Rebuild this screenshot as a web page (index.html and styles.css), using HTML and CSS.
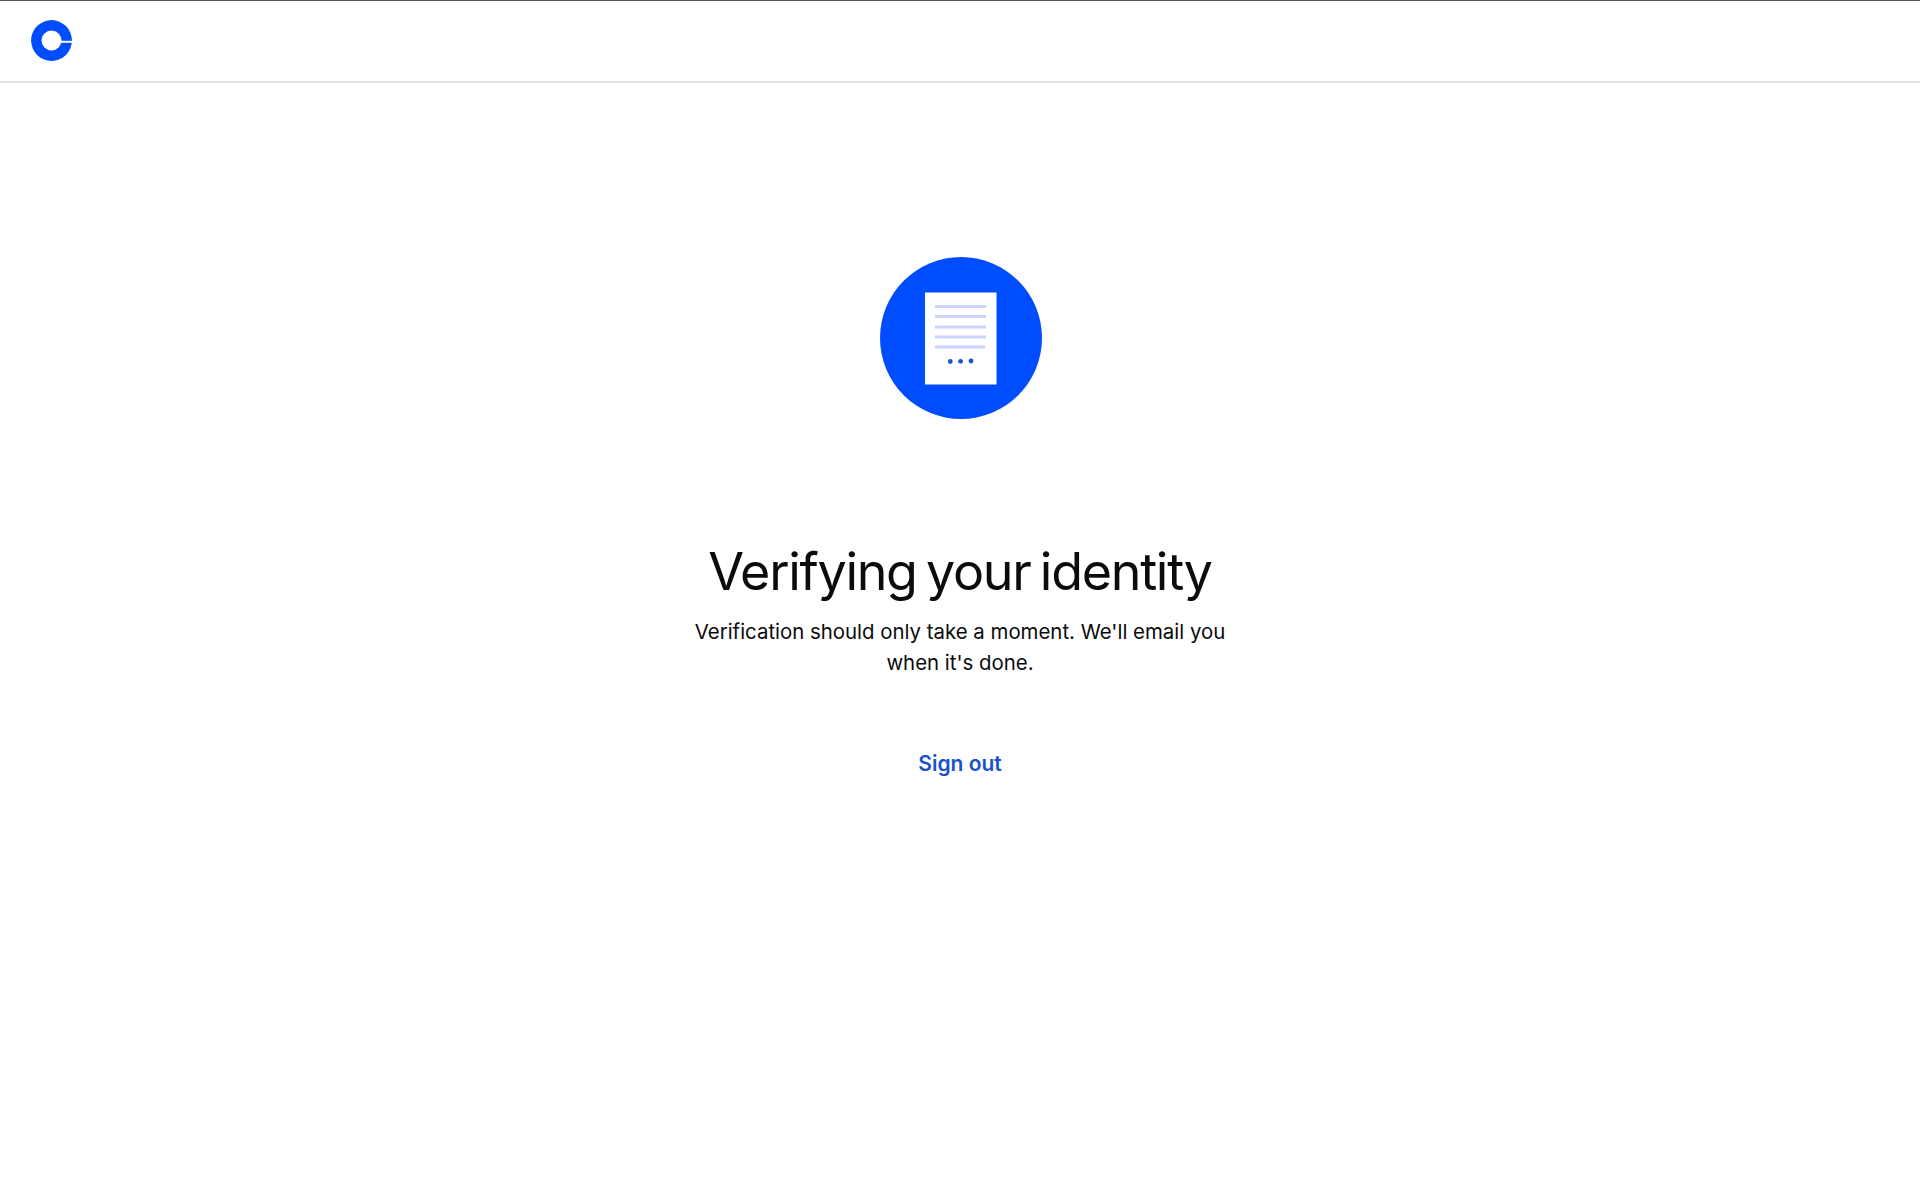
FILE: index.html
```html
<!DOCTYPE html>
<html lang="en">
<head>
    <meta charset="UTF-8">
    <meta name="viewport" content="width=device-width, initial-scale=1.0">
    <title>Verifying your identity</title>
    <link rel="stylesheet" href="styles.css">
</head>
<body>
    <header class="header">
        <svg class="logo" viewBox="0 0 41 41" width="41" height="41">
            <circle cx="20.500" cy="20.500" r="20.400" fill="#004dff"/>
            <circle cx="20.500" cy="20.500" r="10" fill="#ffffff"/>
            <rect x="28" y="20.800" width="13" height="2" fill="#ffffff"/>
        </svg>
    </header>

    <main class="main">
        <svg class="badge" viewBox="0 0 162 162" width="162" height="162">
            <circle cx="81" cy="81" r="81" fill="#004dff"/>
            <rect x="45" y="35.500" width="71.500" height="92" fill="#ffffff"/>
            <g stroke="#ccd4fb" stroke-width="3">
                <line x1="55" y1="49.500" x2="106" y2="49.500"/>
                <line x1="55" y1="59.500" x2="106" y2="59.500"/>
                <line x1="55" y1="70" x2="106" y2="70"/>
                <line x1="55" y1="80" x2="106" y2="80"/>
                <line x1="55" y1="90" x2="105" y2="90"/>
            </g>
            <g fill="#1a4fd6">
                <circle cx="70.300" cy="104.500" r="2.400"/>
                <circle cx="80.600" cy="104.300" r="2.400"/>
                <circle cx="91" cy="104" r="2.400"/>
            </g>
        </svg>
        <h1 class="title">Verifying your identity</h1>
        <p class="text">Verification should only take a moment. We'll email you when it's done.</p>
        <a class="signout" href="#">Sign out</a>
    </main>
</body>
</html>
```

FILE: styles.css
```css
* {
    margin: 0;
    padding: 0;
    box-sizing: border-box;
}
body {
    background: #ffffff;
    font-family: Inter, "Liberation Sans", sans-serif;
    color: #0a0b0d;
}
.header {
    height: 83px;
    display: flex;
    align-items: center;
    padding-left: 31px;
    padding-bottom: 1px;
    border-top: 1px solid #555555;
    border-bottom: 2px solid #e3e3e3;
}
.logo {
    display: block;
}
.main {
    display: flex;
    flex-direction: column;
    align-items: center;
    padding-top: 174px;
}
.badge {
    display: block;
    margin-left: 2px;
}
.title {
    margin-top: 122px;
    font-size: 52px;
    line-height: 62px;
    font-weight: 400;
    letter-spacing: -1.300px;
    word-spacing: -4px;
}
.text {
    width: 560px;
    margin-top: 13px;
    font-size: 20.400px;
    line-height: 31px;
    text-align: center;
}
.signout {
    margin-top: 71px;
    font-size: 21px;
    line-height: 30px;
    font-weight: 600;
    color: #1652cc;
    text-decoration: none;
}
```
